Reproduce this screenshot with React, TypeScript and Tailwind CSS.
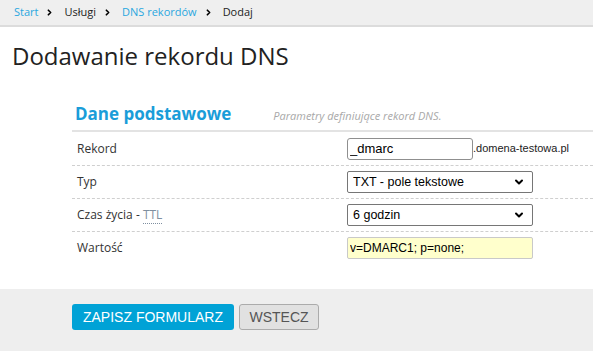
import React from 'react';
import { ChevronRight, ChevronDown } from 'lucide-react';

const sans = { fontFamily: '"Open Sans", "Noto Sans", sans-serif' };
const arial = { fontFamily: '"Liberation Sans", Arial, sans-serif' };

function Crumb({ label, link, last }: { label: string; link?: boolean; last?: boolean }) {
  return (
    <>
      <span className={link ? 'text-[#2aa7df]' : 'text-[#222]'}>{label}</span>
      {!last && <ChevronRight size={9} strokeWidth={4.5} className="ml-[7px] mr-[10px] text-black" />}
    </>
  );
}

function Row({ label, children }: { label: React.ReactNode; children: React.ReactNode }) {
  return (
    <div className="flex items-center h-[33px] border-t border-dashed border-[#cfcfcf]">
      <div className="w-[275px] pl-[5px] text-[12px] text-[#333]">{label}</div>
      <div className="flex items-center">{children}</div>
    </div>
  );
}

function Select({ value }: { value: string }) {
  return (
    <div className="relative flex">
      <select
        defaultValue={value}
        className="appearance-none w-[186px] h-[22px] pl-[5px] border border-[#767676] rounded-[2px] bg-white text-[12.5px] text-black"
        style={arial}
      >
        <option value={value}>{value}</option>
      </select>
      <ChevronDown
        size={12}
        strokeWidth={4}
        className="absolute right-[8px] top-1/2 -translate-y-1/2 text-black pointer-events-none"
      />
    </div>
  );
}

export default function App() {
  return (
    <div className="w-[593px] h-[351px] bg-white flex flex-col overflow-hidden" style={sans}>
      <div className="h-[27px] bg-[#efefef] border-b-2 border-[#dcdcdc] flex items-center pl-[14px] text-[11px]">
        <Crumb label="Start" link />
        <Crumb label="Usługi" />
        <Crumb label="DNS rekordów" link />
        <Crumb label="Dodaj" last />
      </div>

      <h1 className="pl-[12px] mt-[13px] text-[24px] leading-[32px] text-[#222]">Dodawanie rekordu DNS</h1>

      <div className="ml-[72px] mt-[32px]">
        <div className="flex items-end h-[28px] pb-[5px] pl-[3px] border-b-2 border-[#e3e3e3]">
          <span className="text-[17px] font-bold text-[#1a9dd9] leading-[22px]">Dane podstawowe</span>
          <span className="ml-[42px] mb-[1px] text-[11px] italic text-[#a8a8a8]">Parametry definiujące rekord DNS.</span>
        </div>

        <div className="flex items-center h-[33px]">
          <div className="w-[275px] pl-[5px] text-[12px] text-[#333]">Rekord</div>
          <input
            defaultValue="_dmarc"
            className="w-[126px] h-[22px] px-[2px] border border-[#8f8f8f] rounded-[3px] text-[13px] text-black"
            style={arial}
          />
          <span className="text-[11px] text-[#222]" style={arial}>
            .domena-testowa.pl
          </span>
        </div>

        <Row label="Typ">
          <Select value="TXT - pole tekstowe" />
        </Row>

        <Row
          label={
            <>
              Czas życia - <span className="text-[#7f8fa0] border-b border-dotted border-[#7f8fa0]">TTL</span>
            </>
          }
        >
          <Select value="6 godzin" />
        </Row>

        <Row label="Wartość">
          <input
            defaultValue="v=DMARC1; p=none;"
            className="w-[186px] h-[22px] px-[2px] border border-[#c9c9c9] rounded-[2px] bg-[#ffffcc] text-[12px] text-black"
            style={arial}
          />
        </Row>
      </div>

      <div className="mt-auto h-[62px] bg-[#eeeeee] flex items-start pt-[15px] pl-[72px] gap-[5px]" style={arial}>
        <button className="h-[26px] w-[162px] bg-[#00a2d6] text-white text-[14px] rounded-[3px]">ZAPISZ FORMULARZ</button>
        <button className="h-[26px] w-[80px] bg-[#e1e1e1] border border-[#ababab] text-[#555] text-[14px] rounded-[3px]">WSTECZ</button>
      </div>
    </div>
  );
}
